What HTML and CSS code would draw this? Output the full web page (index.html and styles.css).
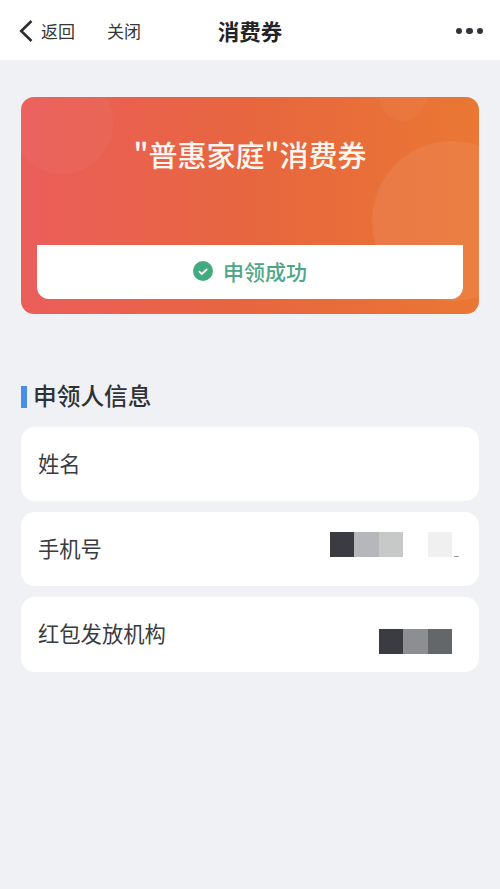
FILE: index.html
```html
<!DOCTYPE html>
<html lang="zh">
<head>
<meta charset="utf-8">
<title>消费券</title>
<link rel="stylesheet" href="styles.css">
</head>
<body>
<header class="nav">
  <div class="nav-left">
    <svg class="back-icon" width="16" height="26" viewBox="0 0 16 26"><path d="M13.5 3 3.2 13l10.3 10" fill="none" stroke="#2c2d30" stroke-width="2.6"/></svg>
    <span class="nav-link back-label">返回</span>
    <span class="nav-link">关闭</span>
  </div>
  <h1 class="nav-title">消费券</h1>
  <div class="dots"><i></i><i></i><i></i></div>
</header>
<main class="page">
  <section class="card">
    <span class="bubble bubble-a"></span>
    <span class="bubble bubble-b"></span>
    <span class="bubble bubble-c"></span>
    <h2 class="card-title">"普惠家庭"消费券</h2>
    <div class="status">
      <svg class="status-icon" width="20" height="20" viewBox="0 0 20 20"><circle cx="10" cy="10" r="10" fill="#43a97f"/><path d="M5.8 10.2 8.8 13l5.4-5" fill="none" stroke="#fff" stroke-width="1.8"/></svg>
      <span>申领成功</span>
    </div>
  </section>
  <h3 class="section-title">申领人信息</h3>
  <div class="rows">
    <div class="row"><span>姓名</span></div>
    <div class="row">
      <span>手机号</span>
      <div class="mosaic mosaic-phone"><i class="t-dark"></i><i class="t-mid"></i><i class="t-pale"></i><i class="t-white"></i><i class="t-faint"></i></div>
    </div>
    <div class="row">
      <span>红包发放机构</span>
      <div class="mosaic mosaic-org"><i class="t-dark"></i><i class="t-grey"></i><i class="t-slate"></i></div>
    </div>
  </div>
</main>
</body>
</html>
```
FILE: styles.css
```css
* { box-sizing: border-box; }
html, body { margin: 0; height: 100%; }
body {
  background: #eff1f5;
  color: #33353a;
  font-family: "Noto Sans CJK SC", "Liberation Sans", sans-serif;
}
.nav {
  height: 60px;
  background: #fff;
  display: flex;
  align-items: center;
  justify-content: space-between;
  padding: 2px 17px 0 18px;
  position: relative;
}
.nav-left { display: flex; align-items: center; }
.back-icon { margin-right: 7px; }
.nav-link { font-size: 17px; line-height: 24px; color: #35363a; }
.back-label { margin-right: 32px; }
.nav-title {
  position: absolute;
  left: 0;
  right: 0;
  top: 2px;
  margin: 0;
  text-align: center;
  font-size: 21.5px;
  line-height: 58px;
  font-weight: 700;
  color: #222327;
}
.dots { display: flex; gap: 4px; }
.dots i { width: 6.5px; height: 6.5px; border-radius: 50%; background: #33343a; }
.page { padding: 37px 21px 0; }
.card {
  height: 217px;
  border-radius: 13px;
  background: linear-gradient(90deg, #eb5d5a 0%, #e7663f 50%, #ea7733 100%);
  padding: 0 16px 15px;
  display: flex;
  flex-direction: column;
  justify-content: space-between;
  position: relative;
  overflow: hidden;
}
.bubble { position: absolute; border-radius: 50%; }
.bubble-a { left: -10px; top: -25px; width: 102px; height: 102px; background: rgba(255,255,255,.035); }
.bubble-b { left: 358px; top: -28px; width: 48px; height: 52px; background: rgba(255,255,255,.04); }
.bubble-c { left: 351px; top: 44px; width: 160px; height: 160px; background: rgba(255,255,255,.07); }
.card-title {
  margin: 37px 0 0;
  position: relative;
  text-align: center;
  color: #fff6f0;
  font-size: 29px;
  line-height: 40px;
  font-weight: 500;
}
.status {
  position: relative;
  height: 54px;
  padding-bottom: 3px;
  background: #fff;
  border-radius: 0 0 12px 12px;
  display: flex;
  align-items: center;
  justify-content: center;
  gap: 10px;
  color: #4fa684;
  font-size: 21px;
  font-weight: 500;
}
.section-title {
  margin: 72px 0 19px;
  border-left: 6px solid #4a8fe6;
  height: 22px;
  padding: 0 0 4px 6px;
  display: flex;
  align-items: center;
  font-size: 23.7px;
  font-weight: 500;
  color: #2f3136;
}
.rows { display: flex; flex-direction: column; gap: 11px; }
.row {
  height: 74.2px;
  padding: 0 27px 4px 17px;
  background: #fff;
  border-radius: 14px;
  display: flex;
  align-items: center;
  justify-content: space-between;
  font-size: 21.3px;
  color: #393b40;
}
.mosaic { display: flex; height: 25px; position: relative; }
.mosaic i { width: 24.4px; }
.mosaic-phone { margin-bottom: 6px; }
.mosaic-phone::after {
  content: "";
  position: absolute;
  right: -7px;
  bottom: 0;
  width: 5px;
  height: 1px;
  background: #9a9ca0;
}
.mosaic-org { margin-top: 19px; }
.t-dark { background: #3a3c42; }
.t-mid { background: #b5b7ba; }
.t-pale { background: #c6c9c8; }
.t-white { background: #fff; }
.t-faint { background: #f0f0f1; }
.t-grey { background: #8d8e91; }
.t-slate { background: #646769; }
```
